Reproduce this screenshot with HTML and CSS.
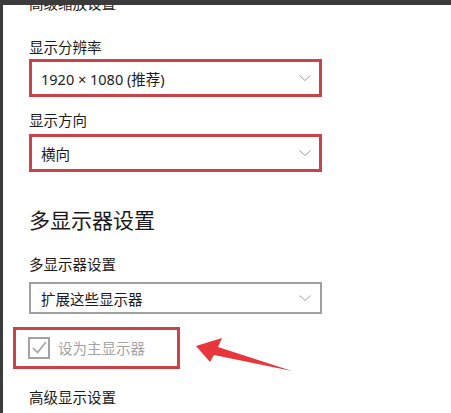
FILE: index.html
```html
<!DOCTYPE html>
<html lang="zh-CN">
<head>
<meta charset="utf-8">
<link rel="stylesheet" href="styles.css">
</head>
<body>
<div class="frame">
  <div class="panel">
    <div class="cut">高级缩放设置</div>
    <div class="label l1">显示分辨率</div>
    <div class="select hl">
      <span>1920 × 1080 (推荐)</span>
      <svg class="chev" width="14" height="8" viewBox="0 0 14 8"><path d="M1.5 1.5 L7 6.5 L12.5 1.5" fill="none" stroke="#a0a0a0" stroke-width="1"/></svg>
    </div>
    <div class="label l2">显示方向</div>
    <div class="select hl">
      <span>横向</span>
      <svg class="chev" width="14" height="8" viewBox="0 0 14 8"><path d="M1.5 1.5 L7 6.5 L12.5 1.5" fill="none" stroke="#a0a0a0" stroke-width="1"/></svg>
    </div>
    <div class="heading">多显示器设置</div>
    <div class="label l3">多显示器设置</div>
    <div class="select plain">
      <span>扩展这些显示器</span>
      <svg class="chev" width="14" height="8" viewBox="0 0 14 8"><path d="M1.5 1.5 L7 6.5 L12.5 1.5" fill="none" stroke="#a0a0a0" stroke-width="1"/></svg>
    </div>
    <div class="checkrow">
      <span class="box"><svg width="18" height="18" viewBox="0 0 18 18"><path d="M3 9 L7.5 13.5 L16 3" fill="none" stroke="#a3a3a3" stroke-width="1.6"/></svg></span>
      <span class="cbtext">设为主显示器</span>
    </div>
    <div class="label l4">高级显示设置</div>
  </div>
  <svg class="arrow" width="451" height="413" viewBox="0 0 451 413">
    <polygon points="196,346 222,338 218,347 292,371 214,355 210,362" fill="#e8363a"/>
  </svg>
</div>
</body>
</html>
```

FILE: styles.css
```css
html, body {
  margin: 0;
  padding: 0;
  background: #3b3b3b;
}
.frame {
  position: relative;
  width: 451px;
  height: 413px;
  overflow: hidden;
  background: #3b3b3b;
}
.panel {
  position: absolute;
  left: 3px;
  top: 5px;
  right: 0;
  bottom: 0;
  overflow: hidden;
  background: #ffffff;
  display: flex;
  flex-direction: column;
  align-items: flex-start;
  padding-left: 26px;
  font-family: "Noto Sans", "Noto Sans CJK SC", sans-serif;
  color: #1c1c1c;
  font-size: 14.5px;
}
.cut {
  margin-top: -12px;
  line-height: 20px;
  height: 20px;
  flex-shrink: 0;
}
.label {
  line-height: 20px;
  height: 20px;
  flex-shrink: 0;
}
.l1 { margin-top: 24px; }
.l2 { margin-top: 13px; }
.l3 { margin-top: 20px; }
.l4 { margin-top: 18px; }
.select {
  box-sizing: border-box;
  width: 293px;
  flex-shrink: 0;
  display: flex;
  align-items: center;
  justify-content: space-between;
  background: #fff;
}
.select span {
  font-size: 14.5px;
}
.hl {
  height: 38px;
  border: 3px solid #c9434b;
  padding: 0 7px 0 9px;
  margin-top: 2px;
}
.l2 + .hl { margin-top: 4px; }
.plain {
  height: 32px;
  border: 2px solid #a0a0a0;
  padding: 0 8px 0 10px;
  margin-top: 8px;
}
.chev { display: block; }
.heading {
  margin-top: 34px;
  font-size: 21px;
  line-height: 28px;
  height: 28px;
  flex-shrink: 0;
  color: #1a1a1a;
}
.checkrow {
  box-sizing: border-box;
  flex-shrink: 0;
  margin-top: 13px;
  margin-left: -16px;
  width: 167px;
  height: 42px;
  border: 3px solid #c9434b;
  display: flex;
  align-items: center;
  gap: 8px;
  padding-left: 12px;
}
.box {
  box-sizing: border-box;
  width: 22px;
  height: 22px;
  border: 2px solid #a3a3a3;
  display: flex;
  align-items: center;
  justify-content: center;
}
.box svg { display: block; }
.cbtext {
  color: #a3a3a3;
  font-size: 14.5px;
  line-height: 20px;
}
.arrow {
  position: absolute;
  left: 0;
  top: 0;
}
```
